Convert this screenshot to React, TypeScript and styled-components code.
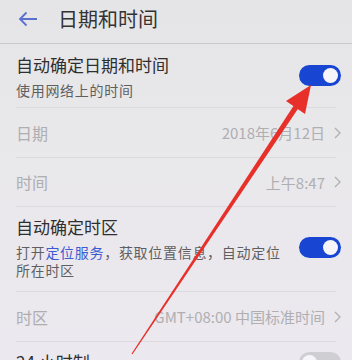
import React from "react";
import styled, { createGlobalStyle } from "styled-components";

const Global = createGlobalStyle`
  html, body { margin: 0; padding: 0; }
  body {
    background: #e8e7ea;
    font-family: "Noto Sans CJK SC", "Noto Sans", sans-serif;
  }
`;

const Page = styled.div`
  position: relative;
  width: 352px;
  height: 360px;
  overflow: hidden;
  background: linear-gradient(180deg, #e5e5e7 0%, #e9e8eb 45%, #ece8ef 100%);
`;

const Header = styled.header`
  height: 43px;
  display: flex;
  align-items: center;
  padding-left: 16px;
  border-bottom: 1px solid #c9c9cc;
  box-sizing: content-box;
`;

const BackBtn = styled.div`
  width: 24px;
  height: 24px;
  display: flex;
  align-items: center;
  justify-content: center;
  margin-top: -6px;
`;

const HeaderTitle = styled.h1`
  margin: 0 0 0 18px;
  font-size: 20px;
  font-weight: 400;
  color: #333;
  line-height: 24px;
  margin-top: -6px;
`;

const Row = styled.div<{ $h: number; $pb?: number }>`
  height: ${(p) => p.$h}px;
  box-sizing: border-box;
  padding: 0 11px ${(p) => p.$pb ?? 0}px 16px;
  display: flex;
  align-items: center;
  justify-content: space-between;
`;

const TextCol = styled.div`
  display: flex;
  flex-direction: column;
`;

const Title = styled.div`
  font-size: 17px;
  line-height: 24px;
  color: #2f2f30;
`;

const Sub = styled.div`
  margin-top: 4px;
  font-size: 14px;
  letter-spacing: 0.7px;
  line-height: 18px;
  color: #5f5f62;
`;

const Link = styled.span`
  color: #3d5ad2;
`;

const Label = styled.div`
  font-size: 16px;
  color: #aeaeb1;
`;

const Value = styled.div`
  display: flex;
  align-items: center;
  gap: 9px;
  font-size: 15px;
  color: #afafb2;
`;

const Divider = styled.div`
  height: 1px;
  margin: 0 16px;
  background: #dcdadf;
`;

const Toggle = styled.div<{ $on: boolean }>`
  position: relative;
  width: 42px;
  height: 21px;
  border-radius: 11px;
  background: ${(p) => (p.$on ? "#1845d2" : "#cfced3")};
  flex-shrink: 0;
  &::after {
    content: "";
    position: absolute;
    top: 3px;
    ${(p) => (p.$on ? "right: 3px;" : "left: 3px;")}
    width: 15px;
    height: 15px;
    border-radius: 50%;
    background: #f6f6fa;
  }
`;

const Overlay = styled.svg`
  position: absolute;
  left: 0;
  top: 0;
  pointer-events: none;
`;

const Chevron = () => (
  <svg width="7" height="12" viewBox="0 0 7 12">
    <path d="M1 1 L6 6 L1 11" fill="none" stroke="#b0b0b3" strokeWidth="1.3" />
  </svg>
);

export default function App() {
  return (
    <>
      <Global />
      <Page>
        <Header>
          <BackBtn>
            <svg width="20" height="16" viewBox="0 0 20 16">
              <path
                d="M19 8 H2 M8.5 1.5 L2 8 L8.5 14.5"
                fill="none"
                stroke="#5a6fd0"
                strokeWidth="1.8"
              />
            </svg>
          </BackBtn>
          <HeaderTitle>日期和时间</HeaderTitle>
        </Header>

        <Row $h={63}>
          <TextCol>
            <Title>自动确定日期和时间</Title>
            <Sub>使用网络上的时间</Sub>
          </TextCol>
          <Toggle $on />
        </Row>
        <Divider />

        <Row $h={49}>
          <Label>日期</Label>
          <Value>
            2018年6月12日
            <Chevron />
          </Value>
        </Row>
        <Divider />

        <Row $h={48}>
          <Label>时间</Label>
          <Value>
            上午8:47
            <Chevron />
          </Value>
        </Row>
        <Divider />

        <Row $h={84} $pb={4}>
          <TextCol>
            <Title>自动确定时区</Title>
            <Sub>
              打开<Link>定位服务</Link>，获取位置信息，自动定位
              <br />
              所在时区
            </Sub>
          </TextCol>
          <Toggle $on />
        </Row>
        <Divider />

        <Row $h={49}>
          <Label>时区</Label>
          <Value>
            GMT+08:00 中国标准时间
            <Chevron />
          </Value>
        </Row>
        <Divider />

        <Row $h={40}>
          <Title>24 小时制</Title>
          <Toggle $on={false} />
        </Row>

        <Overlay width="352" height="360" viewBox="0 0 352 360">
          <polygon
            points="298.2,108.4 132.5,354.3 131.5,353.7 293.8,105.6"
            fill="#e8302b"
          />
          <polygon points="311,85 286,101 305,114" fill="#e8302b" />
        </Overlay>
      </Page>
    </>
  );
}
